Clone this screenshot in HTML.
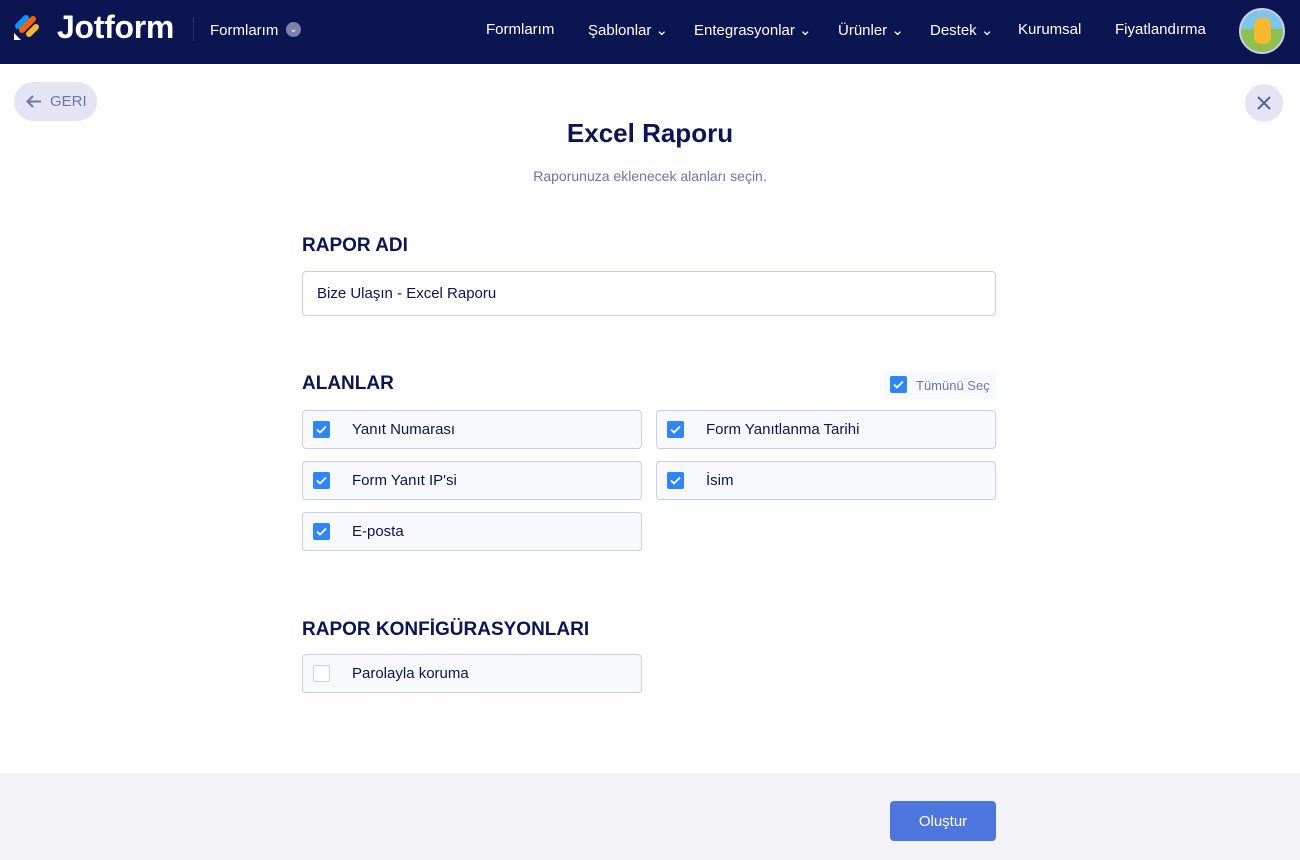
<!DOCTYPE html>
<html><head><meta charset="utf-8"><style>
*{box-sizing:border-box;margin:0;padding:0}
body{width:1300px;height:860px;overflow:hidden;font-family:"Liberation Sans",sans-serif;background:#fff;color:#0a1551;position:relative}
.nav{position:absolute;top:0;left:0;width:1300px;height:64px;background:#0a1551;color:#fff}
.nav .t{position:absolute;top:21px;font-size:15px}
.back{position:absolute;left:14px;top:82px;width:83px;height:39px;border-radius:20px;background:#e3e5f5;color:#6f76a7;font-size:15px;line-height:39px;padding-left:36px}
.close{position:absolute;left:1245px;top:84px;width:38px;height:38px;border-radius:50%;background:#e3e5f5}
h1{position:absolute;top:118px;width:1300px;text-align:center;font-size:26px;font-weight:bold}
.sub{position:absolute;top:168px;width:1300px;text-align:center;font-size:14px;color:#6f76a7}
.h{position:absolute;left:302px;font-size:19px;font-weight:bold}
.inp{position:absolute;left:302px;top:271px;width:694px;height:45px;border:1px solid #c8ceed;border-radius:4px;font-size:15px;line-height:43px;padding-left:14px}
.box{position:absolute;width:340px;height:39px;border:1px solid #c8ceed;border-radius:4px;background:#f8f9fd;font-size:15px;line-height:38px;padding-left:49px}
.cb{position:absolute;left:10px;top:10px;width:17px;height:17px;border-radius:2px;background:#2e86f8}
.cb svg{position:absolute;left:3px;top:4px}
.cb.off{background:#fff;border:1px solid #c8ceed}
.foot{position:absolute;top:773px;left:0;width:1300px;height:87px;background:#f3f3f7}
.btn{position:absolute;left:890px;top:801px;width:106px;height:40px;background:#4d76dd;border-radius:4px;color:#fff;font-size:15px;text-align:center;line-height:41px}
</style></head><body>
<div class="nav">
<svg style="position:absolute;left:13px;top:12px" width="30" height="30" viewBox="0 0 30 30"><line x1="5" y1="14" x2="13" y2="6" stroke="#0099ff" stroke-width="6" stroke-linecap="round"/><line x1="9" y1="18" x2="20" y2="7" stroke="#ff6100" stroke-width="6" stroke-linecap="round"/><line x1="16" y1="22" x2="23" y2="15" stroke="#ffb629" stroke-width="6" stroke-linecap="round"/><path d="M1 28 L1 21 L8 28Z" fill="#fff"/></svg>
<div style="position:absolute;left:57px;top:9px;font-size:32px;font-weight:bold;color:#fff;letter-spacing:-0.3px">Jotform</div>
<div style="position:absolute;left:193px;top:17px;width:1px;height:24px;background:#2a356d"></div>
<div class="t" style="left:210px;top:22px">Formlarım</div>
<div style="position:absolute;left:286px;top:22px;width:15px;height:15px;border-radius:50%;background:#7b80ad;color:#fff;font-size:10px;text-align:center;line-height:15px">⌄</div>
<div class="t" style="left:486px">Formlarım</div>
<div class="t" style="left:588px">Şablonlar ⌄</div>
<div class="t" style="left:694px">Entegrasyonlar ⌄</div>
<div class="t" style="left:838px">Ürünler ⌄</div>
<div class="t" style="left:930px">Destek ⌄</div>
<div class="t" style="left:1018px">Kurumsal</div>
<div class="t" style="left:1115px">Fiyatlandırma</div>
<div style="position:absolute;left:1239px;top:8px;width:46px;height:46px;border-radius:50%;border:2px solid #c9cde0;background:linear-gradient(#7cc7e8 0 45%,#8cc152 45%)"><div style="position:absolute;left:13px;top:8px;width:17px;height:26px;border-radius:7px;background:#f5b82e"></div></div>
</div>
<div class="back"><svg style="position:absolute;left:12px;top:13px" width="16" height="13" viewBox="0 0 16 13"><path d="M15 6.5H2M7 1L1.5 6.5 7 12" stroke="#6f76a7" stroke-width="2" fill="none"/></svg>GERI</div>
<div class="close"><svg style="position:absolute;left:12px;top:12px" width="14" height="14"><path d="M1 1L13 13M13 1L1 13" stroke="#5a6193" stroke-width="2"/></svg></div>
<h1>Excel Raporu</h1>
<div class="sub">Raporunuza eklenecek alanları seçin.</div>
<div class="h" style="top:235px">RAPOR ADI</div>
<div class="inp">Bize Ulaşın - Excel Raporu</div>
<div class="h" style="top:373px">ALANLAR</div>
<div style="position:absolute;left:884px;top:371px;width:112px;height:28px;background:#f8f9fd;font-size:13px;color:#6f76a7;line-height:29px;padding-left:32px">Tümünü Seç<div class="cb" style="left:6px;top:5px"><svg width="11" height="9"><path d="M1 4.5L4 7.5 10 1.5" stroke="#fff" stroke-width="1.8" fill="none"/></svg></div></div>
<div class="box" style="left:302px;top:410px"><div class="cb"><svg width="11" height="9"><path d="M1 4.5L4 7.5 10 1.5" stroke="#fff" stroke-width="1.8" fill="none"/></svg></div>Yanıt Numarası</div>
<div class="box" style="left:656px;top:410px"><div class="cb"><svg width="11" height="9"><path d="M1 4.5L4 7.5 10 1.5" stroke="#fff" stroke-width="1.8" fill="none"/></svg></div>Form Yanıtlanma Tarihi</div>
<div class="box" style="left:302px;top:461px"><div class="cb"><svg width="11" height="9"><path d="M1 4.5L4 7.5 10 1.5" stroke="#fff" stroke-width="1.8" fill="none"/></svg></div>Form Yanıt IP'si</div>
<div class="box" style="left:656px;top:461px"><div class="cb"><svg width="11" height="9"><path d="M1 4.5L4 7.5 10 1.5" stroke="#fff" stroke-width="1.8" fill="none"/></svg></div>İsim</div>
<div class="box" style="left:302px;top:512px"><div class="cb"><svg width="11" height="9"><path d="M1 4.5L4 7.5 10 1.5" stroke="#fff" stroke-width="1.8" fill="none"/></svg></div>E-posta</div>
<div class="h" style="top:619px">RAPOR KONFİGÜRASYONLARI</div>
<div class="box" style="left:302px;top:654px"><div class="cb off"></div>Parolayla koruma</div>
<div class="foot"></div>
<div class="btn">Oluştur</div>
</body></html>
